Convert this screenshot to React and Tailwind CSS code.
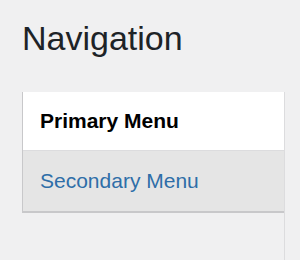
export default function App() {
    return (
        <div
            className="h-[260px] w-[300px] overflow-hidden bg-[#f0f0f1] flex flex-col"
            style={{ fontFamily: '"Liberation Sans", Arial, sans-serif' }}
        >
            <h1 className="pl-[22px] pt-[18px] text-[34px] leading-[41px] font-normal text-[#1d2327]">
                Navigation
            </h1>

            <div className="mt-[33px] ml-[22px] w-[263px] flex-1 border-r border-[#dcdcde]">
                <ul className="border-l border-b-2 border-[#c8c8ca]">
                    <li className="h-[59px] flex items-center pl-[17px] bg-white border-b border-[#dcdcde]">
                        <span className="text-[21px] leading-[24px] font-bold text-black">
                            Primary Menu
                        </span>
                    </li>
                    <li className="h-[60px] flex items-center pl-[17px] bg-[#e5e5e5]">
                        <a href="#" className="text-[21px] leading-[24px] text-[#2e6ea8]">
                            Secondary Menu
                        </a>
                    </li>
                </ul>
            </div>
        </div>
    )
}
